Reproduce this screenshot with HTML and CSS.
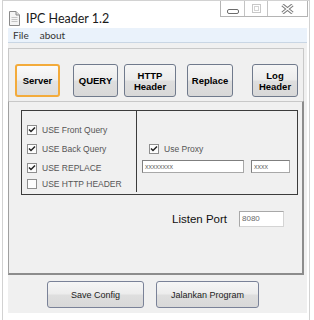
FILE: index.html
```html
<!DOCTYPE html>
<html lang="en">
<head>
    <meta charset="UTF-8">
    <title>IPC Header 1.2</title>
    <link rel="stylesheet" href="styles.css">
</head>
<body>
    <div class="window">
        <div class="titlebar">
            <svg class="app-icon" width="11" height="15" viewBox="0 0 11 15">
                <path d="M0.5 0.5 H7 L10.5 4 V14.5 H0.5 Z" fill="#f4f4f4" stroke="#8a8a8a"/>
                <path d="M7 0.5 V4 H10.5" fill="#dcdcdc" stroke="#8a8a8a"/>
                <path d="M2.5 6.5 H8.5 M2.5 8.5 H8.5 M2.5 10.5 H8.5" stroke="#c4c4c4"/>
            </svg>
            <span class="title">IPC Header 1.2</span>
            <div class="controls">
                <div class="ctl ctl-min">
                    <svg width="12" height="5" viewBox="0 0 12 5"><rect x="0.5" y="0.5" width="11" height="4" rx="1.5" fill="#fff" stroke="#6c6c6c"/></svg>
                </div>
                <div class="ctl ctl-max">
                    <svg width="9" height="9" viewBox="0 0 9 9"><rect x="0.5" y="0.5" width="8" height="8" fill="none" stroke="#c8c8c8"/><rect x="2.5" y="2.5" width="4" height="4" fill="none" stroke="#d4d4d4"/></svg>
                </div>
                <div class="ctl ctl-close">
                    <svg width="13" height="10" viewBox="0 0 13 10">
                        <path d="M1.5 1 L11.5 9 M11.5 1 L1.5 9" stroke="#7a7a7a" stroke-width="3.4"/>
                        <path d="M1.5 1 L11.5 9 M11.5 1 L1.5 9" stroke="#fff" stroke-width="1.4"/>
                    </svg>
                </div>
            </div>
        </div>

        <div class="client">
            <div class="menubar">
                <span class="menu-item">File</span>
                <span class="menu-item">about</span>
            </div>

            <div class="tab-panel">
                <button class="tab-btn active">Server</button>
                <button class="tab-btn b-query">QUERY</button>
                <button class="tab-btn b-http">HTTP<br>Header</button>
                <button class="tab-btn b-replace">Replace</button>
                <button class="tab-btn b-log">Log<br>Header</button>
            </div>

            <div class="content-panel">
                <div class="group">
                    <div class="col-left">
                        <label class="check-row"><span class="check on"></span>USE Front Query</label>
                        <label class="check-row"><span class="check on"></span>USE Back Query</label>
                        <label class="check-row"><span class="check on"></span>USE REPLACE</label>
                        <label class="check-row tight"><span class="check"></span>USE HTTP HEADER</label>
                    </div>
                    <div class="col-right">
                        <label class="check-row proxy"><span class="check on"></span>Use Proxy</label>
                        <div class="proxy-fields">
                            <div class="field f-host">xxxxxxxx</div>
                            <div class="field f-port">xxxx</div>
                        </div>
                    </div>
                </div>
                <div class="listen">
                    <span class="listen-label">Listen Port</span>
                    <div class="field f-listen">8080</div>
                </div>
            </div>

            <div class="actions">
                <button class="act-btn b-save">Save Config</button>
                <button class="act-btn b-run">Jalankan Program</button>
            </div>
        </div>
    </div>
</body>
</html>
```

FILE: styles.css
```css
body {
    margin: 0;
    background-color: #ffffff;
    font-family: 'Liberation Sans', Arial, sans-serif;
    color: #000;
}

.window {
    width: 306px;
    height: 320px;
    margin-left: 2px;
    border: 1px solid #d2d2d2;
    border-bottom: none;
    box-sizing: content-box;
}

.titlebar {
    display: flex;
    align-items: flex-start;
    height: 26px;
    margin-top: 1px;
    background-color: #ffffff;
}

.app-icon {
    margin: 9px 0 0 6px;
}

.title {
    font-family: Lato, sans-serif;
    font-size: 12.5px;
    color: #1a1a1a;
    margin: 9px 0 0 6px;
}

.controls {
    display: flex;
    margin-left: auto;
    margin-right: 1px;
    margin-top: -1px;
    height: 15px;
    border: 1px solid #b4b4b4;
    border-top: none;
}

.ctl {
    display: flex;
    align-items: center;
    justify-content: center;
    height: 15px;
}

.ctl-min {
    width: 23px;
    border-right: 1px solid #c4c4c4;
    align-items: flex-end;
}

.ctl-min svg {
    margin-bottom: 2px;
}

.ctl-max {
    width: 22px;
    border-right: 1px solid #c4c4c4;
}

.ctl-close {
    width: 39px;
    padding-bottom: 1px;
}

.client {
    margin-left: 5px;
    width: 299px;
    height: 285px;
    background-color: #f0f0f0;
}

.menubar {
    display: flex;
    height: 14px;
    background-color: #eaf2fb;
    border-bottom: 1px solid #c9d6e4;
    font-family: Lato, sans-serif;
    font-size: 10px;
    color: #333333;
    line-height: 14px;
}

.menu-item {
    margin-left: 5px;
}

.menu-item + .menu-item {
    margin-left: 11px;
}

.tab-panel {
    display: flex;
    align-items: flex-start;
    margin: 5px 3px 0 0;
    border: 1px solid #c8c8c8;
    padding-top: 15px;
    box-sizing: border-box;
    height: 54px;
}

button {
    font-family: 'Liberation Sans', Arial, sans-serif;
    color: #000;
    border: 1px solid #707a8c;
    border-radius: 3px;
    background: linear-gradient(#f6f6f6 0%, #ececec 48%, #dedede 52%, #d8d8d8 100%);
    padding: 0;
    box-sizing: border-box;
    cursor: pointer;
}

.tab-btn {
    height: 33px;
    width: 45px;
    font-size: 9.5px;
    font-weight: bold;
    line-height: 11px;
    margin-left: 13px;
}

.tab-btn.active {
    margin-left: 6px;
    border: 2px solid #f3ab3b;
    background: linear-gradient(#fafafa 0%, #efefef 48%, #e3e3e3 52%, #dcdcdc 100%);
}

.b-http {
    width: 52px;
    margin-left: 6px;
}

.b-replace {
    width: 46px;
    margin-left: 11px;
}

.b-log {
    width: 46px;
    margin-left: 19px;
}

.content-panel {
    margin: -1px 3px 0 0;
    height: 174px;
    box-sizing: border-box;
    border-top: 1px solid #c8c8c8;
    border-left: 1px solid #a0a0a0;
    border-right: 2px solid #8c8c8c;
    border-bottom: 2px solid #8c8c8c;
    padding-top: 8px;
}

.group {
    display: flex;
    margin-left: 12px;
    width: 277px;
    height: 85px;
    box-sizing: border-box;
    border: 1px solid #3c3c3c;
}

.col-left {
    width: 115px;
    padding: 9px 0 0 5px;
    box-sizing: border-box;
    border-right: 1px solid #3c3c3c;
    margin-bottom: 2px;
}

.check-row {
    display: flex;
    align-items: center;
    height: 19px;
    font-size: 8.5px;
    color: #555555;
    white-space: nowrap;
}

.check-row.tight {
    margin-top: -3px;
}

.check {
    width: 10px;
    height: 10px;
    box-sizing: border-box;
    border: 1px solid #8e8e8e;
    background-color: #fdfdfd;
    margin-right: 5px;
    flex-shrink: 0;
}

.check.on {
    background: #fdfdfd url("data:image/svg+xml,%3Csvg xmlns='http://www.w3.org/2000/svg' width='8' height='8' viewBox='0 0 8 8'%3E%3Cpath d='M1 3.5 L3 5.5 L7 1.5' fill='none' stroke='%23222' stroke-width='1.5'/%3E%3C/svg%3E") center no-repeat;
}

.col-right {
    flex: 1;
    padding: 31px 0 0 12px;
}

.proxy {
    height: 14px;
}

.proxy-fields {
    display: flex;
    margin: 4px 0 0 -7px;
}

.field {
    height: 13px;
    box-sizing: border-box;
    background-color: #ffffff;
    border: 1px solid #a8a8a8;
    border-top-color: #7f7f7f;
    border-left-color: #7f7f7f;
    font-size: 7px;
    color: #6a6a6a;
    line-height: 11px;
    padding-left: 2px;
}

.f-host {
    width: 102px;
}

.f-port {
    width: 39px;
    margin-left: 7px;
}

.listen {
    display: flex;
    align-items: center;
    justify-content: flex-end;
    margin: 16px 18px 0 0;
}

.listen-label {
    font-size: 11.5px;
    color: #111;
}

.f-listen {
    width: 45px;
    height: 16px;
    margin-left: 12px;
    font-size: 8px;
    line-height: 14px;
    border-color: #d4d4d4;
    border-top-color: #a8a8a8;
    border-left-color: #a8a8a8;
}

.actions {
    display: flex;
    margin: 6px 0 0 39px;
}

.act-btn {
    height: 27px;
    font-size: 9px;
    color: #222;
    border-color: #7a8298;
}

.b-save {
    width: 97px;
}

.b-run {
    width: 103px;
    margin-left: 12px;
}
```
